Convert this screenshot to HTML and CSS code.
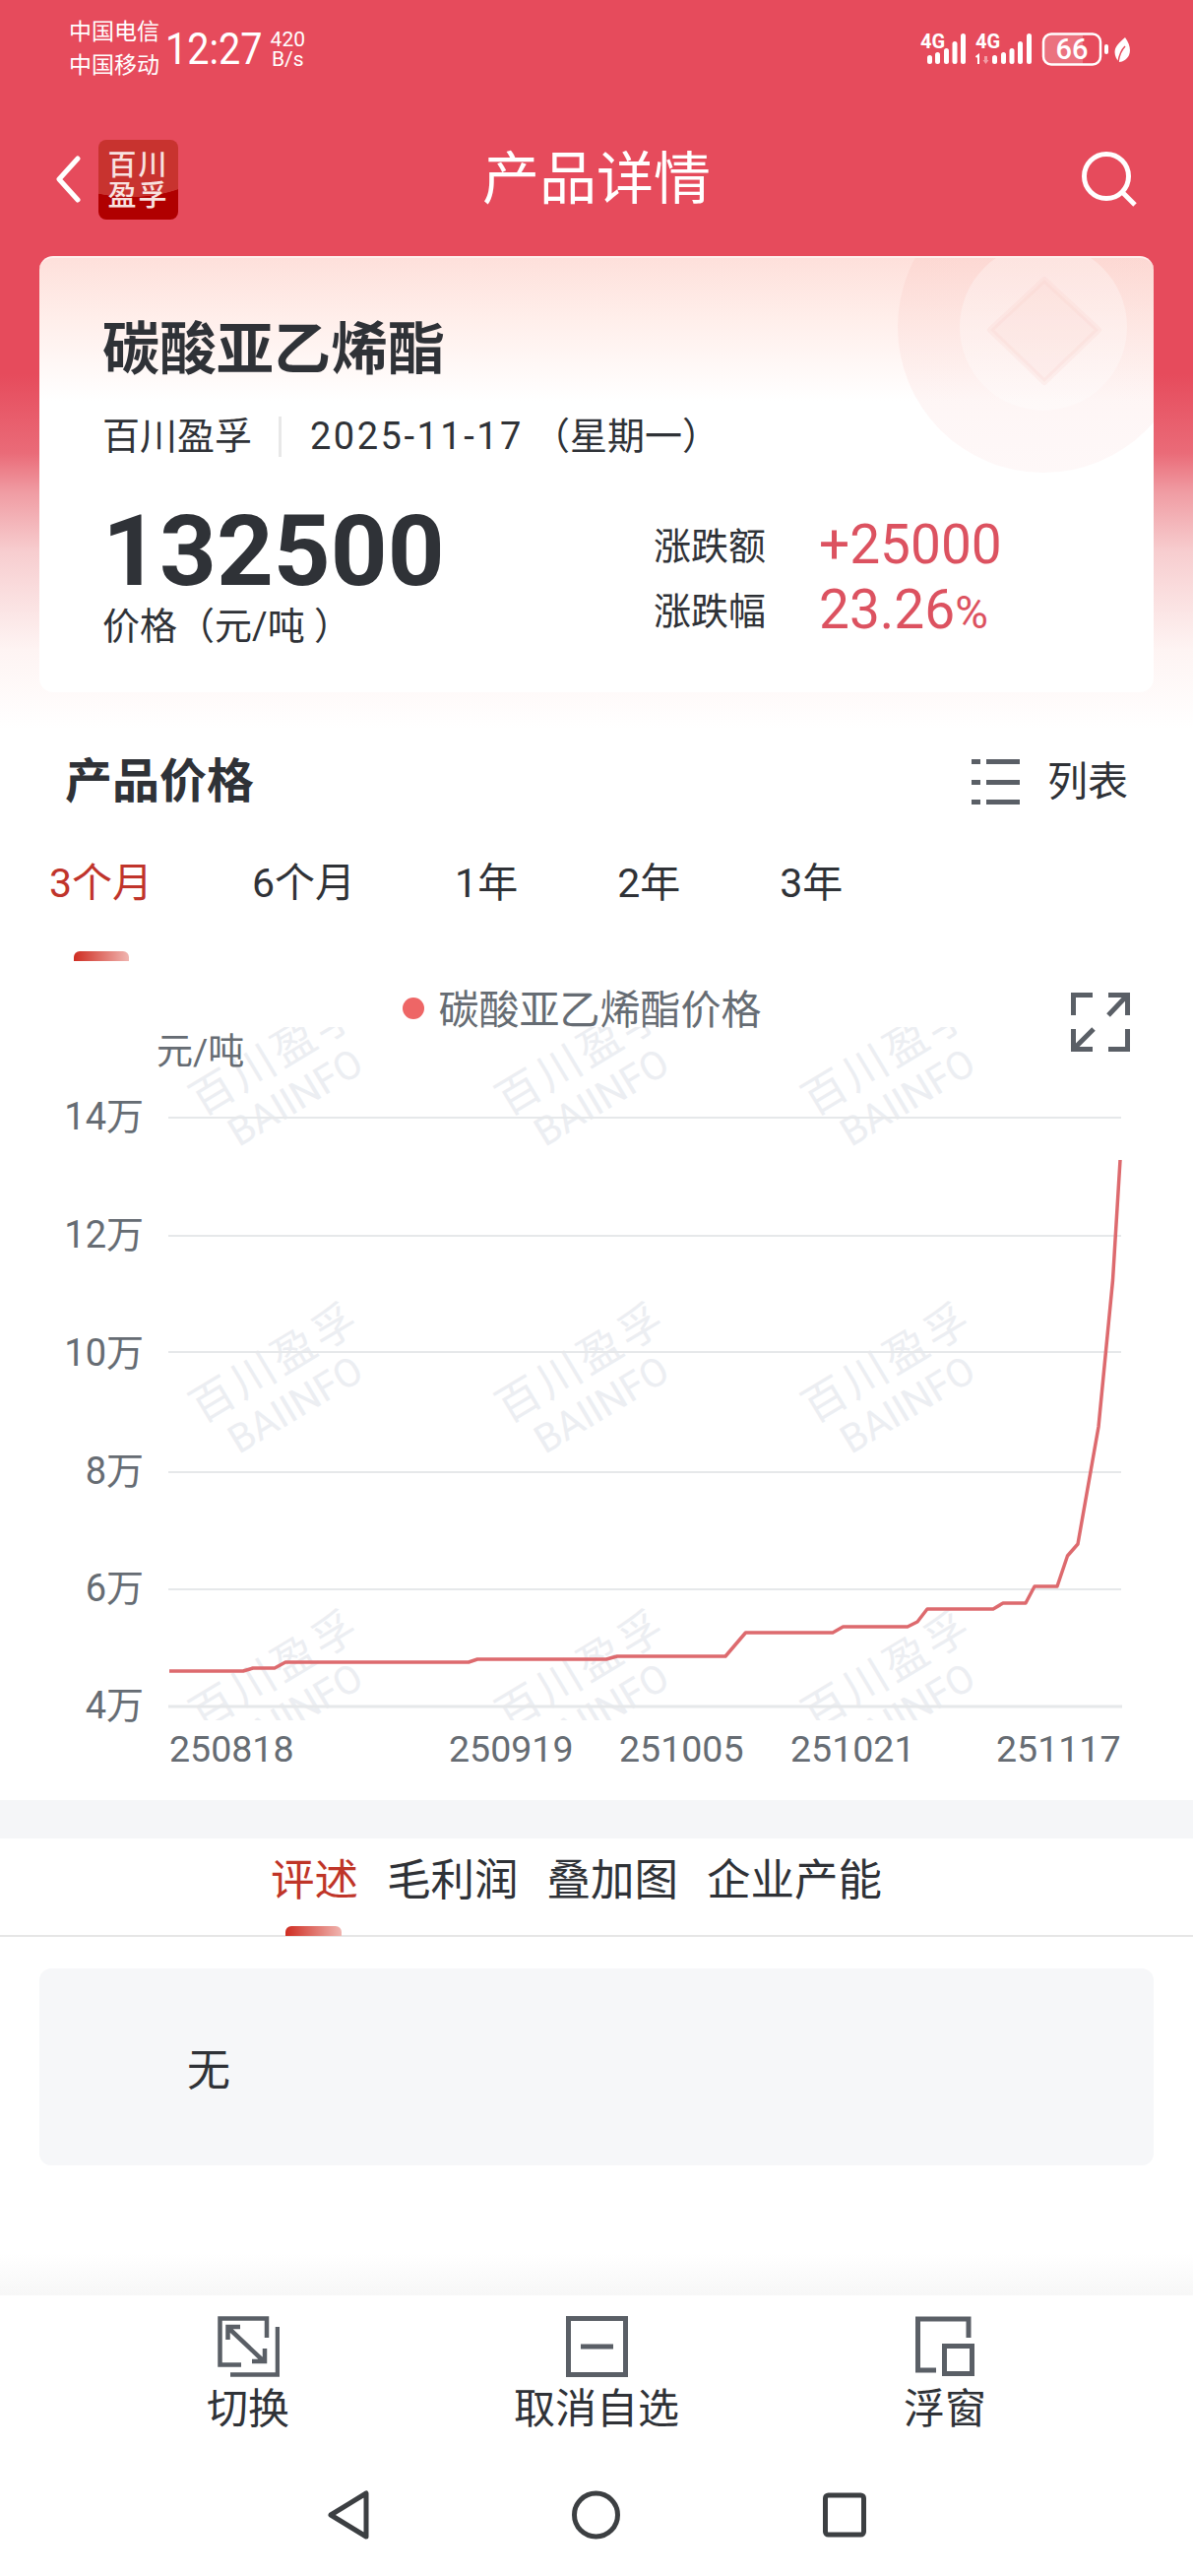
FILE: index.html
```html
<html lang="zh-CN">

<head>
    <meta charset="UTF-8">
    <meta name="viewport" content="width=device-width, initial-scale=1.0">
    <title>产品详情</title>

    <link rel="stylesheet" href="styles.css">
</head>

<body>
    <div class="page">
        <div class="statusBar">
            <div class="carriers">
                <div>中国电信</div>
                <div>中国移动</div>
            </div>
            <div class="clock">12:27</div>
            <div class="netSpeed">
                <div>420</div>
                <div>B/s</div>
            </div>
            <svg class="statusIcons" width="213" height="58" viewBox="935 20 213 58">
                <text class="sigText" x="935" y="48">4G</text>
                <g fill="#fff">
                    <rect x="942" y="55" width="5" height="9" rx="2.500" />
                    <rect x="950" y="52" width="5" height="12" rx="2.500" />
                    <rect x="959" y="48" width="5" height="16" rx="2.500" />
                    <rect x="967.500" y="41" width="5" height="23" rx="2.500" />
                    <rect x="976" y="33" width="5" height="31" rx="2.500" />
                    <rect x="1008" y="55" width="5" height="9" rx="2.500" />
                    <rect x="1017" y="52" width="5" height="12" rx="2.500" />
                    <rect x="1025.500" y="48" width="5" height="16" rx="2.500" />
                    <rect x="1034" y="41" width="5" height="23" rx="2.500" />
                    <rect x="1043" y="33" width="5" height="31" rx="2.500" />
                    <path d="M994 64v-9l-2.500 2" stroke="#fff" stroke-width="2" fill="none" />
                    <path d="M1000 56v4h-1.500l3 4 3-4h-1.500v-4z" opacity=".45" />
                </g>
                <text class="sigText" x="991" y="48">4G</text>
                <path d="M1067 34h33v30h-33a7 7 0 0 1-7-7v-16a7 7 0 0 1 7-7z" fill="#fff" opacity=".22" />
                <rect x="1060" y="33.500" width="58" height="31" rx="8" fill="none" stroke="#fff" stroke-width="2.500" />
                <text class="batteryText" x="1089" y="59">66</text>
                <rect x="1122" y="44" width="4" height="10" rx="2" fill="#fff" />
                <path d="M1143 37c5 7 6 13 4 18-2 4-6 7-10 7-5-5-6-12-2-17 2-3 5-5 8-8z" fill="#fff" />
                <path d="M1136 62c1-7 3-12 7-16" stroke="#e64b5c" stroke-width="1.500" fill="none" />
            </svg>
        </div>

        <div class="topBar">
            <div class="topBarLeft">
                <svg width="25" height="48" viewBox="0 0 25 48" fill="none" stroke="#fff" stroke-width="5" stroke-linecap="round" stroke-linejoin="round">
                    <path d="M22 3 3 24l19 21" />
                </svg>
                <div class="logo">
                    <div>百川</div>
                    <div>盈孚</div>
                </div>
            </div>
            <h1 class="pageTitle">产品详情</h1>
            <div class="topBarRight">
                <svg width="56" height="56" viewBox="0 0 56 56" fill="none" stroke="#fff" stroke-width="5">
                    <circle cx="25" cy="25" r="22.500" />
                    <path d="M42 42 54 54" />
                </svg>
            </div>
        </div>

        <div class="card">
            <svg class="cardDeco" width="300" height="230" viewBox="0 0 300 230">
                <defs>
                    <linearGradient id="decoFade" x1="0" y1="0" x2="0" y2="1">
                        <stop offset="0" stop-color="#f8bdb5" stop-opacity=".26" />
                        <stop offset="1" stop-color="#f8c5c5" stop-opacity=".12" />
                    </linearGradient>
                </defs>
                <circle cx="188" cy="70" r="148" fill="url(#decoFade)" />
                <circle cx="188" cy="70" r="85" fill="#fff" opacity=".3" />
                <path d="M134 73 189 22 244 73 189 126z" fill="#f9c4bc" fill-opacity=".15" stroke="#f9c4bc" stroke-opacity=".15" stroke-width="6" stroke-linejoin="round" />
            </svg>
            <h2 class="productName">碳酸亚乙烯酯</h2>
            <div class="productMeta">
                <span>百川盈孚</span>
                <span class="metaLine"></span>
                <span class="metaDate">2025-11-17</span>
                <span class="metaWeek">（星期一）</span>
            </div>
            <div class="priceRow">
                <div class="priceLeft">
                    <div class="priceValue">132500</div>
                    <div class="priceUnit">价格（元/吨 ）</div>
                </div>
                <div class="priceRight">
                    <div class="changeRow">
                        <span class="changeLabel">涨跌额</span>
                        <span class="changeValue">+25000</span>
                    </div>
                    <div class="changeRow">
                        <span class="changeLabel">涨跌幅</span>
                        <span class="changeValue">23.26<small>%</small></span>
                    </div>
                </div>
            </div>
        </div>

        <div class="sectionHead">
            <h3>产品价格</h3>
            <div class="listBtn">
                <svg width="49" height="46" viewBox="0 0 49 46" fill="#5a5f66">
                    <rect x="0" y="0" width="9" height="5" />
                    <rect x="15" y="0" width="34" height="5" />
                    <rect x="0" y="21" width="9" height="5" />
                    <rect x="15" y="21" width="34" height="5" />
                    <rect x="0" y="41" width="9" height="5" />
                    <rect x="15" y="41" width="34" height="5" />
                </svg>
                <span>列表</span>
            </div>
        </div>

        <div class="rangeTabs">
            <span class="rangeActive">3个月</span>
            <span>6个月</span>
            <span>1年</span>
            <span>2年</span>
            <span>3年</span>
        </div>
        <div class="rangeMark"></div>

        <div class="legend">
            <span class="legendDot"></span>
            <span class="legendText">碳酸亚乙烯酯价格</span>
            <svg class="expandIcon" width="60" height="60" viewBox="0 0 60 60" fill="none" stroke="#5a5f66" stroke-width="5">
                <path d="M2.500 23V2.500H22" />
                <path d="M38 2.500H57.500V23M56 4 38 23" />
                <path d="M2.500 37V57.500H22M4 56 23 37" />
                <path d="M57.500 37V57.500H38" />
            </svg>
        </div>

        <svg class="chart" width="1212" height="785" viewBox="0 1043 1212 785">
            <defs>
                <clipPath id="wmClip">
                    <rect x="0" y="1043" width="1212" height="704" />
                </clipPath>
                <g id="wm">
                    <text class="wmCn">百川盈孚</text>
                    <text class="wmEn" x="16" y="46">BAIINFO</text>
                </g>
            </defs>
            <g clip-path="url(#wmClip)">
                <use href="#wm" transform="translate(205 1134) rotate(-31)" />
                <use href="#wm" transform="translate(516 1134) rotate(-31)" />
                <use href="#wm" transform="translate(827 1134) rotate(-31)" />
                <use href="#wm" transform="translate(205 1446) rotate(-31)" />
                <use href="#wm" transform="translate(516 1446) rotate(-31)" />
                <use href="#wm" transform="translate(827 1446) rotate(-31)" />
                <use href="#wm" transform="translate(205 1758) rotate(-31)" />
                <use href="#wm" transform="translate(516 1758) rotate(-31)" />
                <use href="#wm" transform="translate(827 1758) rotate(-31)" />
            </g>
            <g stroke="#e6e8ea" stroke-width="2">
                <path d="M171 1135H1139" />
                <path d="M171 1255H1139" />
                <path d="M171 1373H1139" />
                <path d="M171 1495H1139" />
                <path d="M171 1614H1139" />
                <path d="M171 1733H1140" stroke-width="3" />
            </g>
            <text class="axisText axisUnit" x="159" y="1081">元/吨</text>
            <g class="axisText" text-anchor="end">
                <text x="146" y="1147">14万</text>
                <text x="146" y="1267">12万</text>
                <text x="146" y="1387">10万</text>
                <text x="146" y="1507">8万</text>
                <text x="146" y="1626">6万</text>
                <text x="146" y="1745">4万</text>
            </g>
            <polyline fill="none" stroke="#dd6a6e" stroke-width="3.500" stroke-linejoin="round"
                points="172,1697 247,1697 257,1694 279,1694 290,1688 476,1688 485,1685 616,1685 627,1682 737,1682 757.500,1658 846,1658 856.500,1652 922,1652 932,1647 942,1634 1009,1634 1019,1628 1042,1628 1051,1611 1074,1611 1084.500,1580 1095,1568 1116,1449 1130.500,1300 1138,1178" />
            <g class="axisText axisDate">
                <text x="172" y="1789">250818</text>
                <text x="456" y="1789">250919</text>
                <text x="629" y="1789">251005</text>
                <text x="803" y="1789">251021</text>
                <text x="1012" y="1789">251117</text>
            </g>
        </svg>

        <div class="grayBand"></div>

        <div class="infoTabs">
            <span class="infoTab infoTabActive">评述</span>
            <span class="infoTab">毛利润</span>
            <span class="infoTab">叠加图</span>
            <span class="infoTab">企业产能</span>
        </div>

        <div class="commentBox">无</div>

        <div class="toolFade"></div>
        <div class="toolBar">
            <div class="toolItem">
                <svg width="63" height="62" viewBox="0 0 63 62" fill="none" stroke="#5a5f66" stroke-width="4.500">
                    <path d="M24 49.500H2.500V2.500H50V22" />
                    <path d="M61 11V59.500H13" />
                    <path d="M11 12 47 46M10.500 24V11H23M48 33V46H35" />
                </svg>
                <span>切换</span>
            </div>
            <div class="toolItem">
                <svg width="63" height="62" viewBox="0 0 63 62" fill="none" stroke="#5a5f66" stroke-width="5">
                    <rect x="2.500" y="2.500" width="58" height="57" />
                    <path d="M15 31H48" />
                </svg>
                <span>取消自选</span>
            </div>
            <div class="toolItem">
                <svg width="60" height="62" viewBox="0 0 60 62" fill="none" stroke="#5a5f66" stroke-width="5">
                    <path d="M21 55H2.500V3H54V22" />
                    <rect x="29.500" y="30.500" width="28" height="28" />
                </svg>
                <span>浮窗</span>
            </div>
        </div>

        <div class="navBar">
            <svg width="42" height="50" viewBox="0 0 42 50" fill="none" stroke="#3c3f42" stroke-width="5" stroke-linejoin="round">
                <path d="M39 3V47L3 25z" />
            </svg>
            <svg width="49" height="50" viewBox="0 0 49 50" fill="none" stroke="#3c3f42" stroke-width="5">
                <circle cx="24.500" cy="25" r="22" />
            </svg>
            <svg width="44" height="50" viewBox="0 0 44 50" fill="none" stroke="#3c3f42" stroke-width="5">
                <rect x="2.500" y="5" width="39" height="40" rx="3" />
            </svg>
        </div>
    </div>
</body>

</html>
```

FILE: styles.css
```css
* {
    box-sizing: border-box;
}

body {
    margin: 0;
    background-color: white;
    font-family: Roboto, "Noto Sans CJK SC", sans-serif;
    color: #2f3237;
}

h1, h2, h3 {
    margin: 0;
}

.page {
    width: 1212px;
    height: 2616px;
    overflow: hidden;
    background: linear-gradient(180deg, #e64b5c 0, #e64b5c 380px, #ea6b78 460px, #f09ca3 500px, #f7cdcf 560px, #fef4f3 660px, #fff 740px) no-repeat;
    background-size: 100% 740px;
}

/* status bar */
.statusBar {
    height: 120px;
    padding: 16px 64px 36px 70px;
    display: flex;
    align-items: center;
    color: white;
}

.carriers {
    font-size: 23px;
    line-height: 34px;
}

.clock {
    margin-left: 6px;
    font-size: 44px;
    transform: scaleX(.9);
    transform-origin: left center;
}

.netSpeed {
    margin-left: -3px;
    font-size: 21px;
    line-height: 20px;
    text-align: center;
}

.statusIcons {
    margin-left: auto;
}

.sigText {
    font-size: 20px;
    font-weight: 700;
    fill: white;
}

.batteryText {
    font-size: 29px;
    font-weight: 500;
    fill: white;
    text-anchor: middle;
}

/* top bar */
.topBar {
    height: 124px;
    margin-bottom: 16px;
    padding: 0 57px;
    display: grid;
    grid-template-columns: 1fr auto 1fr;
    align-items: center;
}

.topBarLeft {
    display: flex;
    align-items: center;
    gap: 18px;
}

.logo {
    width: 81px;
    height: 81px;
    padding-top: 11px;
    border-radius: 8px;
    background: radial-gradient(120% 72% at 40% 0, #c8332f 99%, transparent 100%), #b00000;
    color: #f8e2e0;
    font-size: 29px;
    font-weight: 500;
    line-height: 31px;
    letter-spacing: 2px;
    text-align: center;
}

.pageTitle {
    color: white;
    font-size: 58px;
    font-weight: 400;
    line-height: 70px;
}

.topBarRight {
    display: flex;
    justify-content: flex-end;
}

/* product card */
.card {
    position: relative;
    height: 443px;
    margin: 0 40px;
    padding: 63px 0 0 64px;
    overflow: hidden;
    border-top: 2px solid #ffeeec;
    border-radius: 14px;
    background: linear-gradient(180deg, #fee0db 0, #ffeeea 60px, #fff 145px);
}

.cardDeco {
    position: absolute;
    top: 0;
    right: 0;
}

.productName {
    position: relative;
    font-size: 58px;
    line-height: 60px;
}

.productMeta {
    position: relative;
    margin-top: 37px;
    display: flex;
    align-items: center;
    font-size: 38px;
    line-height: 42px;
}

.metaLine {
    width: 3px;
    height: 41px;
    margin: 0 29px 0 27px;
    background-color: #e8e8e8;
}

.metaDate {
    letter-spacing: 2.500px;
}

.metaWeek {
    margin-left: 9px;
}

.priceRow {
    position: relative;
    margin-top: 56px;
    display: flex;
}

.priceLeft {
    width: 560px;
}

.priceValue {
    font-size: 101px;
    font-weight: 700;
    line-height: 80px;
}

.priceUnit {
    margin-top: 15px;
    font-size: 38px;
    line-height: 42px;
}

.changeRow {
    height: 66px;
    display: flex;
    align-items: center;
}

.changeLabel {
    width: 168px;
    margin-bottom: 3px;
    font-size: 38px;
}

.changeValue {
    color: #dc5260;
    font-size: 55px;
}

.changeValue small {
    font-size: 46px;
}

/* price section */
.sectionHead {
    margin-top: 63px;
    padding: 0 66px 0 66px;
    display: flex;
    justify-content: space-between;
    align-items: center;
}

.sectionHead h3 {
    font-size: 48px;
    line-height: 56px;
}

.listBtn {
    display: flex;
    align-items: center;
    gap: 28px;
    font-size: 41px;
    line-height: 46px;
}

.rangeTabs {
    margin-top: 53px;
    padding-left: 50px;
    display: flex;
    gap: 101px;
    font-size: 41px;
    line-height: 44px;
}

.rangeActive {
    color: #c0342b;
}

.rangeMark {
    width: 56px;
    height: 10px;
    margin: 47px 0 0 75px;
    border-radius: 6px 6px 0 0;
    background: linear-gradient(90deg, #cf2d22, #f0b5b0);
}

.legend {
    position: relative;
    height: 38px;
    margin-top: 29px;
    padding-right: 30px;
    display: flex;
    justify-content: center;
    align-items: center;
    gap: 15px;
    color: #666c73;
    font-size: 41px;
}

.legendText {
    margin-bottom: 5px;
}

.legendDot {
    width: 22px;
    height: 22px;
    border-radius: 50%;
    background-color: #ee6666;
}

.expandIcon {
    position: absolute;
    top: 3px;
    right: 64px;
}

/* chart */
.chart {
    display: block;
}

.axisText {
    fill: #666c73;
    font-size: 38px;
}

.axisUnit {
    font-size: 37px;
}

.axisDate {
    font-size: 37.500px;
}

.wmCn, .wmEn {
    fill: #eceef2;
    font-size: 44px;
}

.wmCn {
    letter-spacing: 4px;
}

.wmEn {
    font-size: 40px;
}

.grayBand {
    height: 39px;
    background-color: #f5f6f8;
}

/* info tabs */
.infoTabs {
    height: 100px;
    padding: 21px 0 0 275px;
    display: flex;
    gap: 29px;
    border-bottom: 2px solid #e6e6e6;
    font-size: 44.500px;
    line-height: 44px;
}

.infoTab {
    position: relative;
}

.infoTabActive {
    color: #bf3528;
}

.infoTabActive::after {
    content: "";
    position: absolute;
    left: 15px;
    top: 68px;
    width: 57px;
    height: 10px;
    border-radius: 6px 6px 0 0;
    background: linear-gradient(90deg, #cf2d22, #f0b5b0);
}

.commentBox {
    height: 200px;
    margin: 32px 40px 0;
    padding-left: 150px;
    display: flex;
    align-items: center;
    border-radius: 12px;
    background-color: #f6f7f9;
    font-size: 44px;
}

/* bottom bars */
.toolFade {
    height: 42px;
    margin-top: 90px;
    background: linear-gradient(180deg, #fff, #f7f7f7);
}

.toolBar {
    padding: 21px 75px 0;
    display: grid;
    grid-template-columns: repeat(3, 1fr);
}

.toolItem {
    display: flex;
    flex-direction: column;
    align-items: center;
    gap: 11px;
    font-size: 42px;
    line-height: 44px;
}

.navBar {
    margin-top: 60px;
    display: flex;
    justify-content: center;
    gap: 206px;
}
```
